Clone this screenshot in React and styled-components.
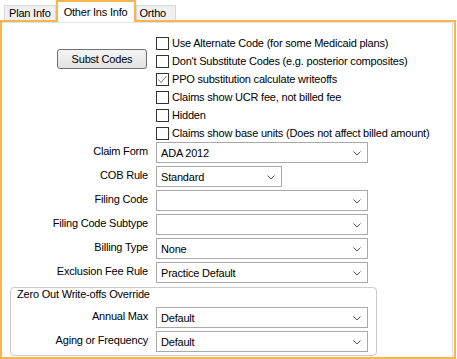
import styled, { createGlobalStyle } from "styled-components";

const GlobalStyle = createGlobalStyle`
  body {
    margin: 0;
    background: #fff;
    font-family: "Liberation Sans", Arial, sans-serif;
    font-size: 11px;
    letter-spacing: -0.2px;
    color: #000;
  }
`;

const Window = styled.div`
  width: 457px;
  height: 359px;
  display: flex;
  flex-direction: column;
  background: #fff;
  overflow: hidden;
`;

const TabStrip = styled.div`
  display: flex;
  align-items: flex-end;
  height: 20px;
  padding-left: 4px;
  position: relative;
  z-index: 1;
`;

const Tab = styled.div`
  box-sizing: border-box;
  height: 15px;
  padding: 0 ${(p) => p.$right}px 0 ${(p) => p.$left}px;
  border: 1px solid #d9d9d9;
  border-bottom: none;
  background: #f0f0f0;
  line-height: 15px;
  white-space: nowrap;
`;

const ActiveTab = styled.div`
  box-sizing: border-box;
  height: 22px;
  margin-bottom: -2px;
  padding: 0 7px 0 6px;
  border: 2px solid #fbb44e;
  border-bottom: none;
  background: #fff;
  line-height: 20px;
  white-space: nowrap;
`;

const Panel = styled.div`
  flex: 1;
  margin-right: 1px;
  border: 2px solid #fbb44e;
  display: flex;
  flex-direction: column;
`;

const Page = styled.div`
  flex: 1;
  margin-right: 1px;
  border-top: 1px solid #e3e3e3;
  border-right: 1px solid #e3e3e3;
  display: flex;
  flex-direction: column;
`;

const TopSection = styled.div`
  display: flex;
`;

const ButtonColumn = styled.div`
  width: 154px;
  padding: 26px 0 0 55px;
  box-sizing: border-box;
`;

const Button = styled.button`
  width: 90px;
  height: 20px;
  padding: 0;
  border: 1px solid #707070;
  border-radius: 3px;
  background: linear-gradient(#f4f4f4, #e2e2e2);
  font: inherit;
  letter-spacing: inherit;
  color: #000;
`;

const CheckList = styled.div`
  padding-top: 11px;
  display: flex;
  flex-direction: column;
`;

const CheckRow = styled.label`
  display: flex;
  align-items: center;
  gap: 3px;
  height: 18px;
  white-space: nowrap;
`;

const Box = styled.span`
  box-sizing: border-box;
  width: 13px;
  height: 13px;
  border: 1px solid #333;
  background: #fff;
  display: flex;
  align-items: center;
  justify-content: center;
`;

const FieldRow = styled.div`
  display: flex;
  height: 21px;
  margin-bottom: 3px;
`;

const Label = styled.div`
  width: ${(p) => p.$width}px;
  margin-right: 8px;
  display: flex;
  align-items: center;
  justify-content: flex-end;
  padding-bottom: 3px;
  box-sizing: border-box;
  white-space: nowrap;
`;

const Combo = styled.div`
  box-sizing: border-box;
  width: ${(p) => p.$width}px;
  height: 21px;
  border: 1px solid #a9a9a9;
  background: #fff;
  display: flex;
  align-items: center;
  justify-content: space-between;
  padding: 1px 6px 0 4px;
`;

const Group = styled.div`
  box-sizing: border-box;
  width: 367px;
  margin: 1px 0 0 8px;
  border: 1px solid #cbcbcb;
  border-radius: 4px;
`;

const GroupTitle = styled.div`
  height: 19px;
  line-height: 13px;
  padding-left: 6px;
`;

const Chevron = () => (
  <svg width="8" height="5" viewBox="0 0 8 5">
    <polyline points="0.5,0.5 4,4 7.5,0.5" fill="none" stroke="#555" strokeWidth="1" />
  </svg>
);

const Check = ({ checked, children }) => (
  <CheckRow>
    <Box>
      {checked && (
        <svg width="11" height="11" viewBox="0 0 11 11">
          <polyline points="1.5,5.5 4,8.5 9.5,2" fill="none" stroke="#777" strokeWidth="1" />
        </svg>
      )}
    </Box>
    {children}
  </CheckRow>
);

const Field = ({ label, value, labelWidth = 146, width = 212 }) => (
  <FieldRow>
    <Label $width={labelWidth}>{label}</Label>
    <Combo $width={width}>
      <span>{value}</span>
      <Chevron />
    </Combo>
  </FieldRow>
);

export default function App() {
  return (
    <Window>
      <GlobalStyle />
      <TabStrip>
        <Tab $left={4} $right={4}>Plan Info</Tab>
        <ActiveTab>Other Ins Info</ActiveTab>
        <Tab $left={2} $right={9}>Ortho</Tab>
      </TabStrip>
      <Panel>
        <Page>
          <TopSection>
            <ButtonColumn>
              <Button>Subst Codes</Button>
            </ButtonColumn>
            <CheckList>
              <Check>Use Alternate Code (for some Medicaid plans)</Check>
              <Check>Don't Substitute Codes (e.g. posterior composites)</Check>
              <Check checked>PPO substitution calculate writeoffs</Check>
              <Check>Claims show UCR fee, not billed fee</Check>
              <Check>Hidden</Check>
              <Check>Claims show base units (Does not affect billed amount)</Check>
            </CheckList>
          </TopSection>
          <Field label="Claim Form" value="ADA 2012" />
          <Field label="COB Rule" value="Standard" width={126} />
          <Field label="Filing Code" value="" />
          <Field label="Filing Code Subtype" value="" />
          <Field label="Billing Type" value="None" />
          <Field label="Exclusion Fee Rule" value="Practice Default" />
          <Group>
            <GroupTitle>Zero Out Write-offs Override</GroupTitle>
            <Field label="Annual Max" value="Default" labelWidth={137} />
            <Field label="Aging or Frequency" value="Default" labelWidth={137} />
          </Group>
        </Page>
      </Panel>
    </Window>
  );
}
